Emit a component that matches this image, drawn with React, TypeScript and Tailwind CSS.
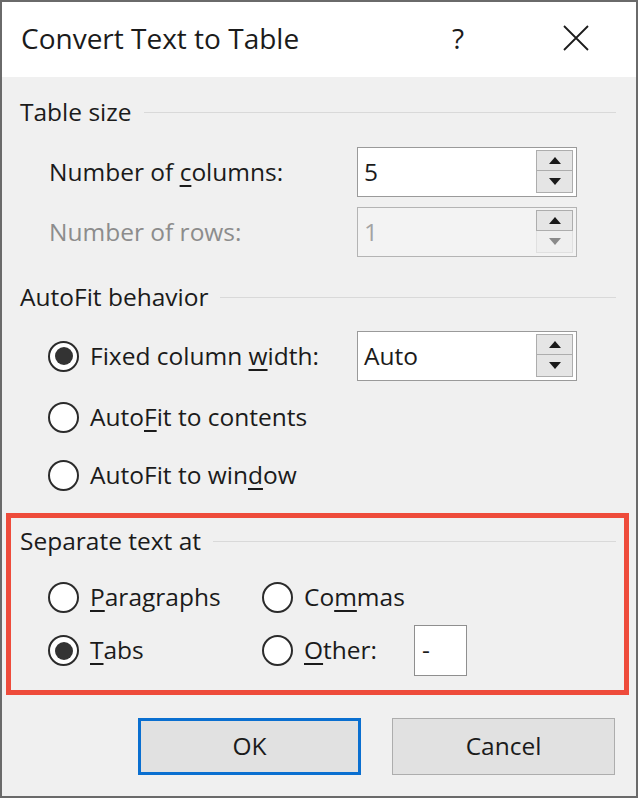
import { ReactNode } from 'react'

// small helpers for the dialog controls
function GroupHeader({ label }: { label: string }) {
  return (
    <div className="flex items-center h-[30px] gap-[12px]">
      <span>{label}</span>
      <div className="flex-1 h-px bg-[#d9d9d9]" />
    </div>
  )
}

function Arrow({ up, color }: { up?: boolean; color: string }) {
  return (
    <svg width="12" height="7" viewBox="0 0 12 7">
      <path d={up ? 'M0 7 L6 0 L12 7 Z' : 'M0 0 L6 7 L12 0 Z'} fill={color} />
    </svg>
  )
}

function SpinBox({ value, disabled }: { value: string; disabled?: boolean }) {
  return (
    <div
      className={`flex w-[220px] h-[50px] border ${
        disabled ? 'border-[#b4b4b4] bg-[#f3f3f3] text-[#a3a3a3]' : 'border-[#9a9a9a] bg-white'
      }`}
    >
      <div className="flex-1 flex items-center pl-[6px]">{value}</div>
      <div className="flex flex-col pt-[2px] pb-[3px] pr-[3px]">
        <div className="w-[37px] h-[21px] flex items-center justify-center bg-[#e5e5e5] border border-[#adadad]">
          <Arrow up color="#1a1a1a" />
        </div>
        <div
          className={`w-[37px] h-[22px] flex items-center justify-center border border-t-0 ${
            disabled ? 'bg-[#efefef] border-[#e0e0e0]' : 'bg-[#e5e5e5] border-[#adadad]'
          }`}
        >
          <Arrow color={disabled ? '#8a8a8a' : '#1a1a1a'} />
        </div>
      </div>
    </div>
  )
}

function Radio({ checked, children }: { checked?: boolean; children: ReactNode }) {
  return (
    <div className="flex items-center gap-[11px]">
      <span className="w-[31px] h-[31px] rounded-full border-[2.5px] border-[#2b2b2b] bg-white flex items-center justify-center shrink-0">
        {checked && <span className="w-[18px] h-[18px] rounded-full bg-[#333333]" />}
      </span>
      <span>{children}</span>
    </div>
  )
}

function Key({ children }: { children: ReactNode }) {
  return <span className="underline underline-offset-[4px] decoration-[1.5px]">{children}</span>
}

export default function App() {
  return (
    <div className="w-[638px] h-[798px] border-2 border-[#6a6a6a] bg-[#f0f0f0] flex flex-col font-['Open_Sans',sans-serif] text-[24.5px] text-[#1b1b1b] overflow-hidden">
      {/* TITLE BAR */}
      <div className="h-[75px] bg-white flex items-center shrink-0">
        <span className="pl-[19px] text-[28px] flex-1 mt-[-3px]">Convert Text to Table</span>
        <span className="text-[28px] w-[14px] mr-[97px] mt-[-3px]">?</span>
        <svg width="26" height="26" viewBox="0 0 26 26" className="mr-[47px] mt-[-4px]">
          <path d="M1 1 L25 25 M25 1 L1 25" stroke="#1b1b1b" strokeWidth="1.8" fill="none" />
        </svg>
      </div>

      {/* BODY */}
      <div className="flex flex-col">
        <div className="mt-[20px] pl-[18px] pr-[20px]">
          <GroupHeader label="Table size" />
        </div>

        <div className="mt-[20px] h-[50px] flex items-center pl-[47px]">
          <div className="w-[308px]">
            Number of <Key>c</Key>olumns:
          </div>
          <SpinBox value="5" />
        </div>
        <div className="mt-[10px] h-[50px] flex items-center pl-[47px]">
          <div className="w-[308px] text-[#8c8c8c]">Number of rows:</div>
          <SpinBox value="1" disabled />
        </div>

        <div className="mt-[25px] pl-[18px] pr-[20px]">
          <GroupHeader label="AutoFit behavior" />
        </div>

        <div className="mt-[19px] h-[50px] flex items-center pl-[46px]">
          <div className="w-[309px]">
            <Radio checked>
              Fixed column <Key>w</Key>idth:
            </Radio>
          </div>
          <SpinBox value="Auto" />
        </div>
        <div className="mt-[11px] h-[50px] flex items-center pl-[46px]">
          <Radio>
            Auto<Key>F</Key>it to contents
          </Radio>
        </div>
        <div className="mt-[8px] h-[50px] flex items-center pl-[46px]">
          <Radio>
            AutoFit to win<Key>d</Key>ow
          </Radio>
        </div>

        {/* SEPARATE TEXT AT (highlighted) */}
        <div className="mt-[13px] ml-[4px] w-[623px] border-[5px] border-[#ee4b3b] pb-[14px]">
          <div className="mt-[8px] pl-[9px] pr-[8px]">
            <GroupHeader label="Separate text at" />
          </div>
          <div className="mt-[16px] h-[50px] flex items-center pl-[37px]">
            <div className="w-[214px]">
              <Radio>
                <Key>P</Key>aragraphs
              </Radio>
            </div>
            <Radio>
              Co<Key>m</Key>mas
            </Radio>
          </div>
          <div className="mt-[3px] h-[51px] flex items-center pl-[37px]">
            <div className="w-[214px]">
              <Radio checked>
                <Key>T</Key>abs
              </Radio>
            </div>
            <div className="w-[152px]">
              <Radio>
                <Key>O</Key>ther:
              </Radio>
            </div>
            <div className="w-[53px] h-[51px] border border-[#8f8f8f] bg-white flex items-center pl-[7px]">
              -
            </div>
          </div>
        </div>

        {/* BUTTONS */}
        <div className="mt-[23px] flex justify-end gap-[31px] pr-[21px]">
          <button className="w-[223px] h-[57px] bg-[#e1e1e1] border-[3px] border-[#0a6fd0] flex items-center justify-center">
            OK
          </button>
          <button className="w-[223px] h-[57px] bg-[#e1e1e1] border border-[#adadad] flex items-center justify-center">
            Cancel
          </button>
        </div>
      </div>
    </div>
  )
}
